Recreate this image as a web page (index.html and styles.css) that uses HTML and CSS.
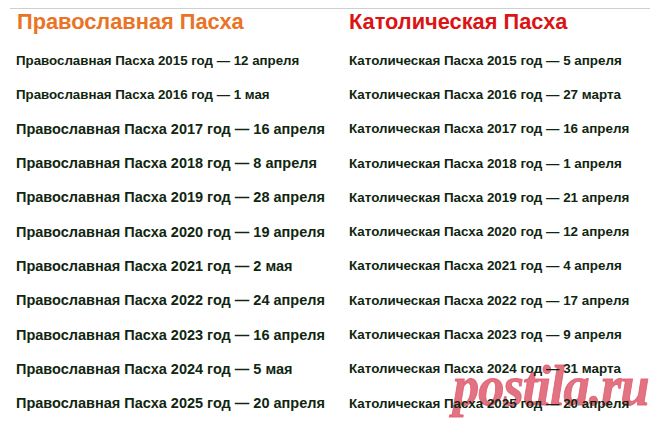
FILE: index.html
```html
<!DOCTYPE html>
<html lang="ru">
<head>
<meta charset="utf-8">
<link rel="stylesheet" href="styles.css">
</head>
<body>
<div class="page">
  <div class="watermark">postila.ru</div>
  <div class="rule"></div>
  <div class="table">
    <div class="col col-left">
      <h2 class="head head-orth">Православная Пасха</h2>
      <div class="row small">Православная Пасха 2015 год — 12 апреля</div>
      <div class="row small">Православная Пасха 2016 год — 1 мая</div>
      <div class="row">Православная Пасха 2017 год — 16 апреля</div>
      <div class="row">Православная Пасха 2018 год — 8 апреля</div>
      <div class="row">Православная Пасха 2019 год — 28 апреля</div>
      <div class="row">Православная Пасха 2020 год — 19 апреля</div>
      <div class="row">Православная Пасха 2021 год — 2 мая</div>
      <div class="row">Православная Пасха 2022 год — 24 апреля</div>
      <div class="row">Православная Пасха 2023 год — 16 апреля</div>
      <div class="row">Православная Пасха 2024 год — 5 мая</div>
      <div class="row">Православная Пасха 2025 год — 20 апреля</div>
    </div>
    <div class="col col-right">
      <h2 class="head head-cath">Католическая Пасха</h2>
      <div class="row small">Католическая Пасха 2015 год — 5 апреля</div>
      <div class="row small">Католическая Пасха 2016 год — 27 марта</div>
      <div class="row small">Католическая Пасха 2017 год — 16 апреля</div>
      <div class="row small">Католическая Пасха 2018 год — 1 апреля</div>
      <div class="row small">Католическая Пасха 2019 год — 21 апреля</div>
      <div class="row small">Католическая Пасха 2020 год — 12 апреля</div>
      <div class="row small">Католическая Пасха 2021 год — 4 апреля</div>
      <div class="row small">Католическая Пасха 2022 год — 17 апреля</div>
      <div class="row small">Католическая Пасха 2023 год — 9 апреля</div>
      <div class="row small">Католическая Пасха 2024 год — 31 марта</div>
      <div class="row small">Католическая Пасха 2025 год — 20 апреля</div>
    </div>
  </div>
</div>
</body>
</html>
```
FILE: styles.css
```css
html, body {
  margin: 0;
  padding: 0;
  background: #ffffff;
}
.page {
  position: relative;
  width: 659px;
  height: 428px;
  overflow: hidden;
  font-family: "Liberation Sans", Arial, sans-serif;
}
.rule {
  margin: 8px 9px 0 10px;
  height: 1px;
  background: #cfcfcf;
}
.table {
  position: relative;
  display: grid;
  grid-template-columns: 333px 1fr;
  padding-left: 16px;
}
.col {
  display: grid;
  grid-template-rows: 34px repeat(11, 34.3px);
  align-items: center;
}
.head {
  margin: 1px 0 0 0;
  font-size: 21.8px;
  font-weight: bold;
  line-height: 24px;
  align-self: start;
}
.head-orth { color: #ea7325; padding-left: 1px; }
.head-cath { color: #db1414; }
.row {
  font-size: 14.5px;
  font-weight: bold;
  color: #102610;
  white-space: nowrap;
}
.col-left .row.small { font-size: 13.3px; }
.col-right .row.small { font-size: 13.4px; }
.watermark {
  position: absolute;
  left: 453px;
  top: 357px;
  font-family: "Liberation Serif", "Times New Roman", serif;
  font-style: italic;
  font-weight: bold;
  font-size: 58px;
  color: rgba(222, 90, 108, 0.85);
  -webkit-text-stroke: 1px rgba(222, 90, 108, 0.85);
  letter-spacing: -1px;
  line-height: 1;
  transform: scaleX(0.9);
  transform-origin: left center;
}
```
